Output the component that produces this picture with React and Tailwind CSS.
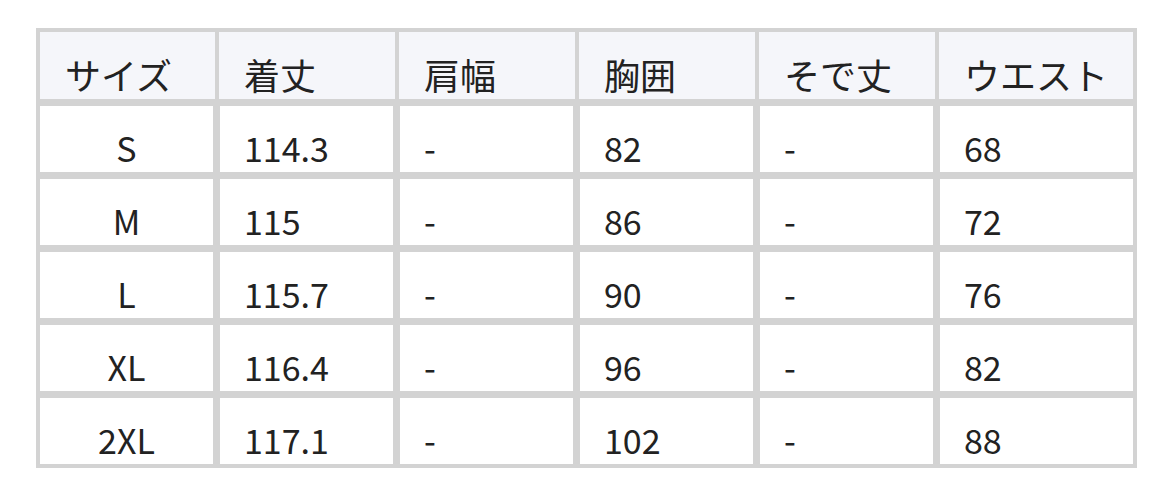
import React from "react";

const headers = ["サイズ", "着丈", "肩幅", "胸囲", "そで丈", "ウエスト"];

const rows = [
  ["S", "114.3", "-", "82", "-", "68"],
  ["M", "115", "-", "86", "-", "72"],
  ["L", "115.7", "-", "90", "-", "76"],
  ["XL", "116.4", "-", "96", "-", "82"],
  ["2XL", "117.1", "-", "102", "-", "88"],
];

const gridCols =
  "grid grid-cols-[175px_176px_176px_176px_176px_1fr] gap-x-[4px]";

const SizeTable = () => {
  return (
    <div className="w-[1101px] bg-[#d3d3d3] p-[4px] flex flex-col gap-[7px]">
      <div className={`${gridCols} h-[67px]`}>
        {headers.map((h) => (
          <div
            key={h}
            className="bg-[#f5f6fa] flex items-end pl-[25px] text-[36px] leading-[50px]"
          >
            {h}
          </div>
        ))}
      </div>
      {rows.map((row) => (
        <div key={row[0]} className={`${gridCols} h-[66px]`}>
          {row.map((cell, i) => (
            <div
              key={i}
              className={
                "bg-white flex items-end leading-[49px] border-[#d3d3d3] " +
                (i === 0 ? "justify-center border-r-[2px]" : "pl-[24px]") +
                (i > 0 && i < 5 ? " border-l-[1px] border-r-[2px]" : "") +
                (i === 5 ? " border-l-[1px]" : "")
              }
            >
              {cell}
            </div>
          ))}
        </div>
      ))}
    </div>
  );
};

export default function App() {
  return (
    <div
      className="w-[1172px] h-[495px] bg-white pt-[28px] pl-[36px] text-[34px] text-[#222222]"
      style={{ fontFamily: '"Noto Sans CJK JP", "Noto Sans", sans-serif' }}
    >
      <SizeTable />
    </div>
  );
}
